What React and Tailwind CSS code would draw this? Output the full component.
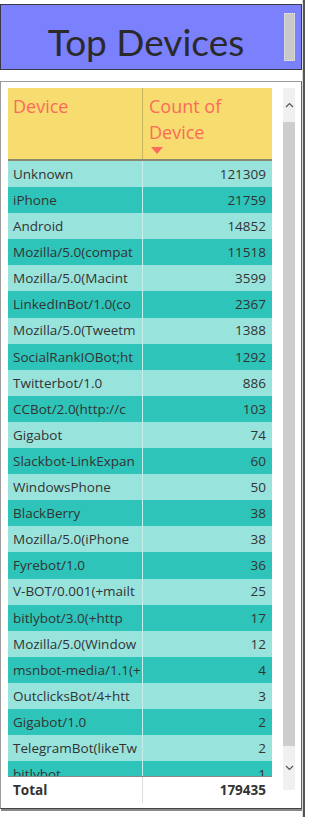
import React from 'react';

const rows = [
  ['Unknown', '121309'],
  ['iPhone', '21759'],
  ['Android', '14852'],
  ['Mozilla/5.0(compat', '11518'],
  ['Mozilla/5.0(Macint', '3599'],
  ['LinkedInBot/1.0(co', '2367'],
  ['Mozilla/5.0(Tweetm', '1388'],
  ['SocialRankIOBot;ht', '1292'],
  ['Twitterbot/1.0', '886'],
  ['CCBot/2.0(http://c', '103'],
  ['Gigabot', '74'],
  ['Slackbot-LinkExpan', '60'],
  ['WindowsPhone', '50'],
  ['BlackBerry', '38'],
  ['Mozilla/5.0(iPhone', '38'],
  ['Fyrebot/1.0', '36'],
  ['V-BOT/0.001(+mailt', '25'],
  ['bitlybot/3.0(+http', '17'],
  ['Mozilla/5.0(Window', '12'],
  ['msnbot-media/1.1(+', '4'],
  ['OutclicksBot/4+htt', '3'],
  ['Gigabot/1.0', '2'],
  ['TelegramBot(likeTw', '2'],
  ['bitlybot', '1'],
];

const font = { fontFamily: '"Open Sans", "Noto Sans", sans-serif' };

export default function App() {
  return (
    <div className="w-[312px] h-[817px] bg-white flex text-[#333]" style={font}>
      <div className="w-[302px] flex flex-col pt-[4px]">
        {/* title card */}
        <div className="h-[66px] bg-[#7b80fd] border border-[#3a3a4a] flex items-center relative">
          <div className="flex-1 text-center text-[37px] leading-none text-[#2a2a2a] pr-[10px] pt-[8px] font-['Lato',sans-serif]">Top Devices</div>
          <div className="absolute right-[6px] top-[8px] w-[11px] h-[48px] bg-[#c9c9c9] border border-dotted border-[#e6e6e6]"></div>
        </div>

        {/* table card */}
        <div className="mt-[11px] h-[728px] border border-[#9a9a9a] border-b-[#444] border-r-[#666] shadow-[1px_2px_0_#888] flex pl-[7px] pt-[6px]">
          <div className="w-[264px] flex flex-col">
            <div className="h-[73px] flex bg-[#f7dc6f] border-b-2 border-[#8a8a70] text-[#fb6b5b] text-[18px] leading-[26px]">
              <div className="w-[135px] border-r border-[#c8b560] pl-[5px] pt-[5px]">Device</div>
              <div className="flex-1 pl-[6px] pt-[5px]">
                <div>Count of</div>
                <div>Device</div>
                <svg width="12" height="7" viewBox="0 0 12 7" className="ml-[2px] mt-[2px]">
                  <path d="M0 0 L12 0 L6 7 Z" fill="#fb6b5b" />
                </svg>
              </div>
            </div>
            <div className="h-[615px] overflow-hidden">
              {rows.map(([name, count], i) => (
                <div
                  key={i}
                  className={`h-[26.1px] flex items-center text-[13.5px] ${i % 2 === 0 ? 'bg-[#98e4dd]' : 'bg-[#2fc4b9]'}`}
                >
                  <div className="w-[135px] h-full flex items-center pl-[5px] border-r border-[#c4efeb] whitespace-nowrap overflow-hidden">{name}</div>
                  <div className="flex-1 text-right pr-[6px]">{count}</div>
                </div>
              ))}
            </div>
            <div className="h-[27px] flex items-center border-t border-[#888] bg-white text-[13.5px] font-bold">
              <div className="w-[135px] h-full flex items-center pl-[5px] border-r border-[#ddd]">Total</div>
              <div className="flex-1 text-right pr-[6px]">179435</div>
            </div>
          </div>

          {/* scrollbar */}
          <div className="ml-[11px] w-[12px] h-[702px] bg-[#f0f0f0] flex flex-col items-center">
            <div className="h-[34px] flex items-center justify-center">
              <svg width="9" height="6" viewBox="0 0 9 6"><path d="M1 5 L4.5 1.5 L8 5" stroke="#555" strokeWidth="1.2" fill="none" /></svg>
            </div>
            <div className="w-full h-[624px] bg-[#cdcdcd]"></div>
            <div className="flex-1 flex items-center justify-center">
              <svg width="9" height="6" viewBox="0 0 9 6"><path d="M1 1 L4.5 4.5 L8 1" stroke="#555" strokeWidth="1.2" fill="none" /></svg>
            </div>
          </div>
        </div>
      </div>
      <div className="w-[1px] bg-[#d8d8d8]"></div>
      <div className="w-[2px] bg-[#555]"></div>
    </div>
  );
}
